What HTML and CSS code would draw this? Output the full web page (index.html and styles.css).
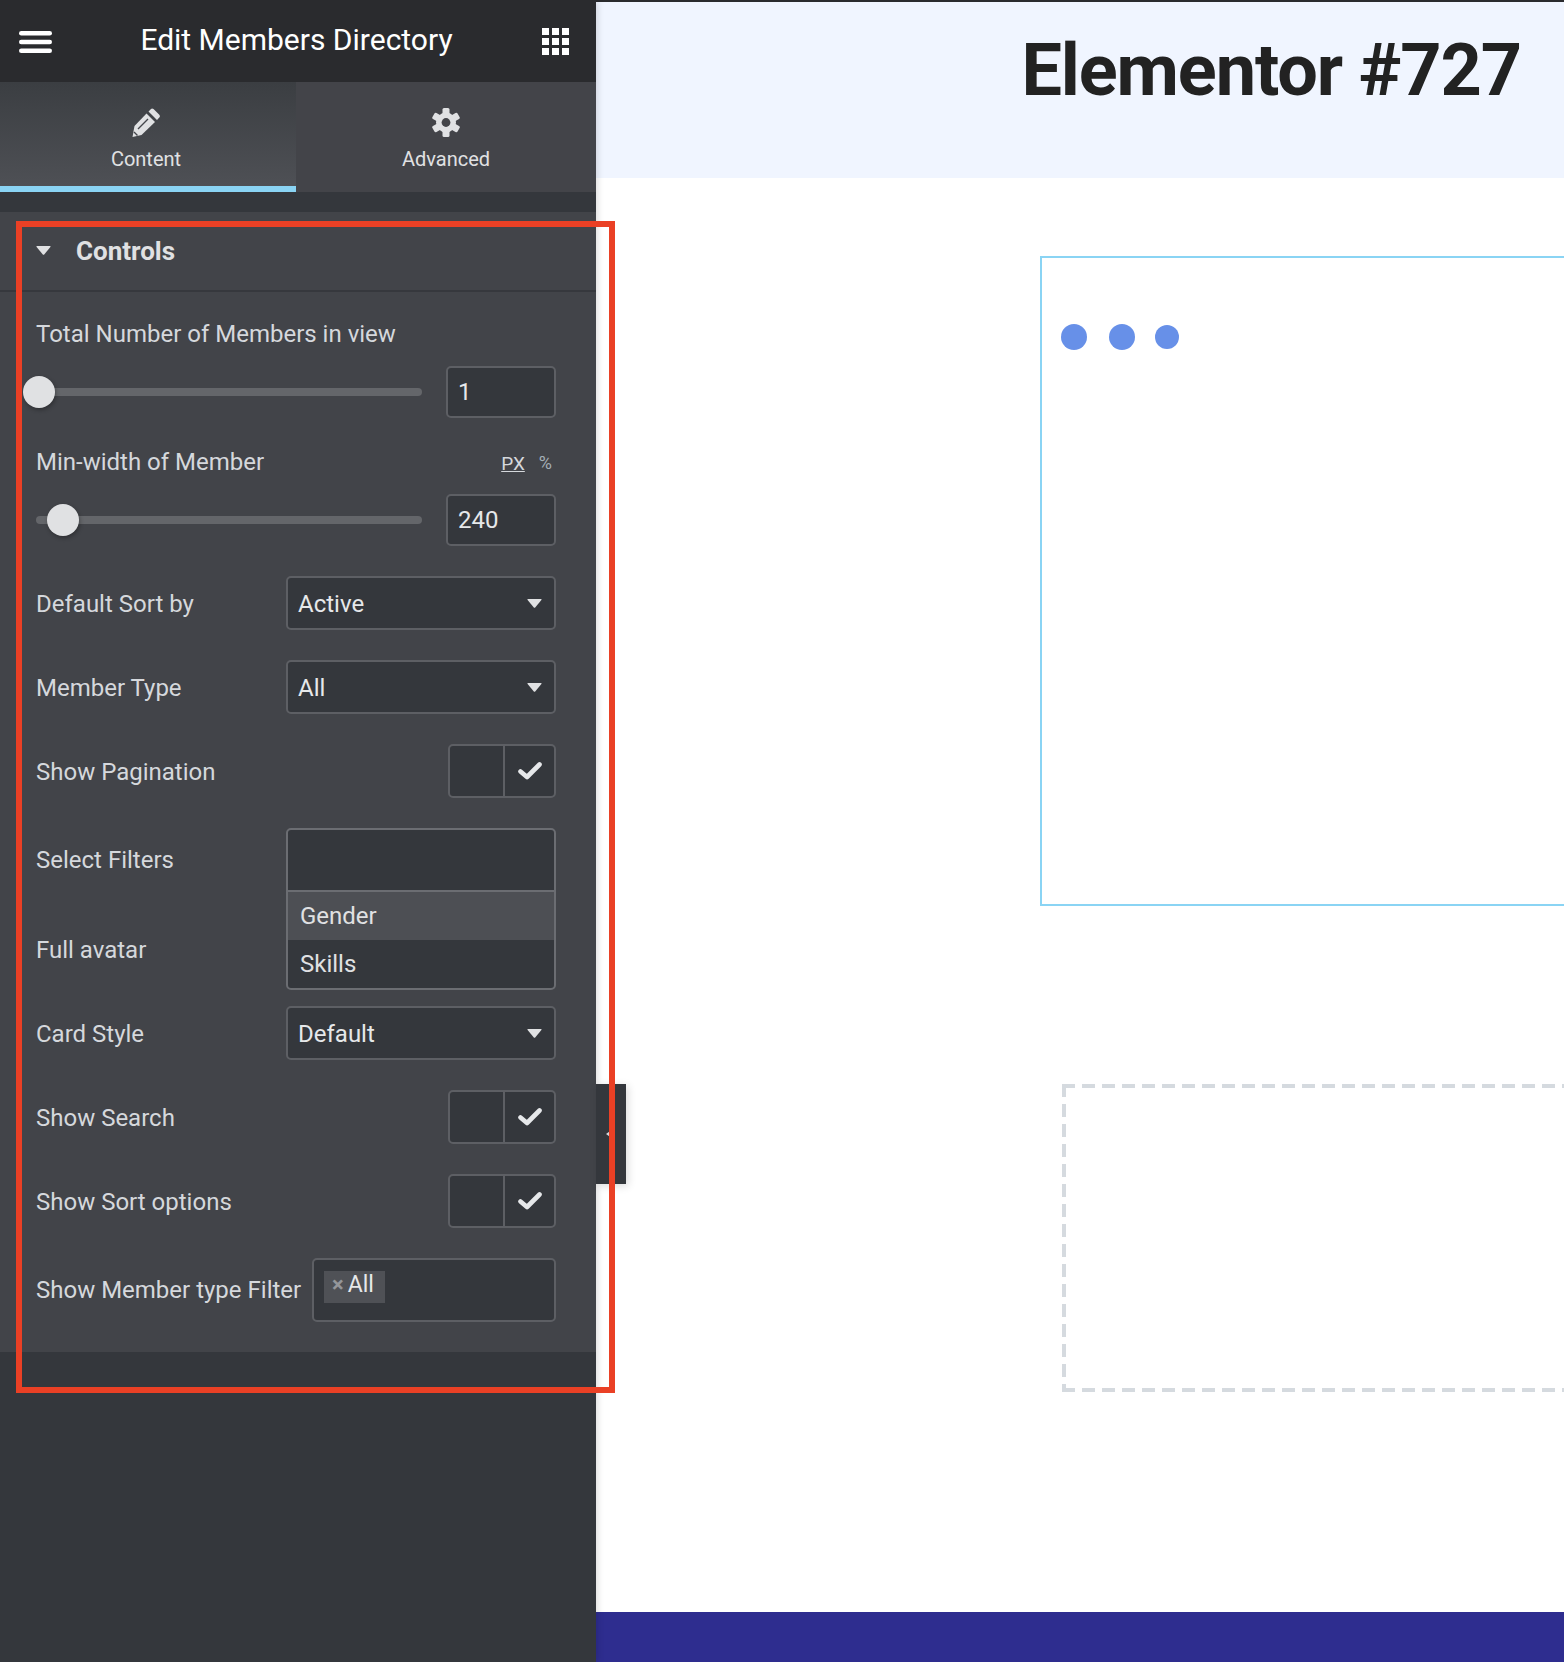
FILE: index.html
```html
<!doctype html>
<html>
<head>
<meta charset="utf-8">
<meta name="viewport" content="width=device-width, initial-scale=1.0">
<link rel="stylesheet" href="styles.css">
<title>Edit Members Directory</title>
</head>
<body>

<svg class="defs" width="0" height="0">
  <symbol id="check" viewBox="0 0 24 18">
    <path d="M2.5 9.5 L9 15 L21.5 2.5" fill="none" stroke="#e6e8ea" stroke-width="4.6" stroke-linejoin="round" stroke-linecap="round"/>
  </symbol>
  <symbol id="caret" viewBox="0 0 15 9">
    <path d="M1 0 H14 Q15 0 14.4 1 L8.2 8.4 Q7.5 9 6.8 8.4 L0.6 1 Q0 0 1 0 Z" fill="#e0e1e3"/>
  </symbol>
</svg>

<aside class="panel">
  <header class="panel-top">
    <svg class="hamburger" width="33" height="22" viewBox="0 0 33 22">
      <rect x="0" y="0" width="33" height="4.6" rx="2.3" fill="#fff"/>
      <rect x="0" y="8.7" width="33" height="4.6" rx="2.3" fill="#fff"/>
      <rect x="0" y="17.4" width="33" height="4.6" rx="2.3" fill="#fff"/>
    </svg>
    <h1>Edit Members Directory</h1>
    <div class="apps">
      <i></i><i></i><i></i><i></i><i></i><i></i><i></i><i></i><i></i>
    </div>
  </header>

  <nav class="tabs">
    <div class="tab tab-active">
      <svg width="28" height="29" viewBox="0 0 28 29">
        <path d="M14.5 5.5 L23 14 L9.5 27 L0.5 29 L2.5 18 Z" fill="#e0e1e3"/>
        <path d="M16.5 3.5 L19 1 Q20 0 21.5 1 L27.3 6.8 Q28.5 8.3 27.3 9.5 L25 12 Z" fill="#e0e1e3"/>
        <path d="M6 21 L16 11 M2 24 L5.5 27.5" stroke="#44464b" stroke-width="1.4" fill="none"/>
      </svg>
      <span>Content</span>
    </div>
    <div class="tab">
      <svg width="28" height="29" viewBox="0 0 28 29">
        <g fill="#e0e1e3">
          <circle cx="14" cy="14.5" r="10"/>
          <rect x="10.5" y="0" width="7" height="29" rx="1.5"/>
          <rect x="10.5" y="0" width="7" height="29" rx="1.5" transform="rotate(60 14 14.5)"/>
          <rect x="10.5" y="0" width="7" height="29" rx="1.5" transform="rotate(120 14 14.5)"/>
        </g>
        <circle cx="14" cy="14.5" r="4.4" fill="#434449"/>
      </svg>
      <span>Advanced</span>
    </div>
  </nav>

  <section class="section">
    <div class="section-head">
      <svg class="section-caret" width="15" height="9"><use href="#caret"/></svg>
      <h2>Controls</h2>
    </div>

    <div class="section-body">
      <div class="label">Total Number of Members in view</div>
      <div class="slider-row">
        <div class="track"><span class="handle handle-start"></span></div>
        <div class="field num">1</div>
      </div>

      <div class="label-row">
        <div class="label">Min-width of Member</div>
        <div class="units"><u>PX</u><span>%</span></div>
      </div>
      <div class="slider-row slider-last">
        <div class="track"><span class="handle handle-240"></span></div>
        <div class="field num">240</div>
      </div>

      <div class="row">
        <div class="label">Default Sort by</div>
        <div class="field select">Active<svg width="15" height="9"><use href="#caret"/></svg></div>
      </div>

      <div class="row">
        <div class="label">Member Type</div>
        <div class="field select">All<svg width="15" height="9"><use href="#caret"/></svg></div>
      </div>

      <div class="row">
        <div class="label">Show Pagination</div>
        <div class="switcher"><span></span><span><svg width="24" height="18"><use href="#check"/></svg></span></div>
      </div>

      <div class="row row-filters">
        <div class="label">Select Filters</div>
        <div class="multi">
          <div class="multi-input"></div>
          <div class="multi-opt multi-hover">Gender</div>
          <div class="multi-opt">Skills</div>
        </div>
      </div>

      <div class="row">
        <div class="label">Full avatar</div>
      </div>

      <div class="row">
        <div class="label">Card Style</div>
        <div class="field select">Default<svg width="15" height="9"><use href="#caret"/></svg></div>
      </div>

      <div class="row">
        <div class="label">Show Search</div>
        <div class="switcher"><span></span><span><svg width="24" height="18"><use href="#check"/></svg></span></div>
      </div>

      <div class="row">
        <div class="label">Show Sort options</div>
        <div class="switcher"><span></span><span><svg width="24" height="18"><use href="#check"/></svg></span></div>
      </div>

      <div class="row row-tags">
        <div class="label">Show Member type Filter</div>
        <div class="field tags"><span class="tag"><b>×</b>All</span></div>
      </div>
    </div>
  </section>
</aside>

<main class="preview">
  <div class="strip"></div>
  <div class="title-band"><h1>Elementor #727</h1></div>
  <div class="widget">
    <div class="dots"><i></i><i></i><i class="dot-small"></i></div>
  </div>
  <div class="dropzone"></div>
  <footer class="footer"></footer>
</main>

<div class="collapse"><i></i></div>
<div class="annotation"></div>

</body>
</html>
```

FILE: styles.css
```css
html, body {
    margin: 0;
    padding: 0;
    height: 1662px;
    overflow: hidden;
}
body {
    display: flex;
    position: relative;
    font-family: Roboto, "Liberation Sans", sans-serif;
    background-color: #fff;
}
h1, h2 {
    margin: 0;
    padding: 0;
}
.defs {
    position: absolute;
}

/* left panel */
.panel {
    width: 596px;
    flex-shrink: 0;
    background-color: #34373c;
    box-shadow: 0 0 8px rgba(0, 0, 0, 0.2);
    position: relative;
    z-index: 2;
}
.panel-top {
    height: 82px;
    background-color: #2a2b2e;
    display: flex;
    align-items: center;
    justify-content: space-between;
    padding: 0 27px 0 19px;
    box-sizing: border-box;
}
.panel-top h1 {
    color: #fff;
    font-size: 30px;
    font-weight: 400;
    margin: 0 1px 4px 0;
}
.hamburger {
    display: block;
    margin-top: 1px;
}
.apps {
    display: grid;
    grid-template-columns: repeat(3, 7px);
    grid-auto-rows: 7px;
    gap: 3px;
}
.apps i {
    background-color: #fff;
}

.tabs {
    display: flex;
    height: 110px;
}
.tab {
    width: 300px;
    background-color: #434449;
    color: #e0e1e3;
    font-size: 20px;
    display: flex;
    flex-direction: column;
    align-items: center;
    padding-top: 26px;
    box-sizing: border-box;
    gap: 10px;
}
.tab-active {
    width: 296px;
    padding-right: 4px;
    background: linear-gradient(#3b3e42, #4e5055);
    border-bottom: 6px solid #8ad4f4;
}

.section {
    margin-top: 20px;
    background-color: #424449;
}
.section-head {
    height: 80px;
    border-bottom: 2px solid #36383d;
    box-sizing: border-box;
    display: flex;
    align-items: center;
    padding: 0 36px;
    gap: 25px;
}
.section-caret {
    margin-bottom: 2px;
}
.section-head h2 {
    color: #e0e1e3;
    font-size: 26px;
    font-weight: 700;
}
.section-body {
    padding: 27px 40px 30px 36px;
}

.label {
    color: #d5d8dc;
    font-size: 24px;
    line-height: 30px;
}
.row .label {
    padding-top: 2px;
}
.row-filters .label, .row-tags .label {
    padding-top: 0;
}
.label-row {
    display: flex;
    justify-content: space-between;
    align-items: center;
}
.units {
    color: #d5d8dc;
    font-size: 19px;
    display: flex;
    gap: 14px;
    padding: 3px 4px 0 0;
}
.units span {
    color: #a4afb7;
    font-size: 18px;
}

.slider-row {
    display: flex;
    align-items: center;
    gap: 24px;
    margin: 17px 0 29px;
}
.slider-last {
    margin: 17px 0 30px;
}
.track {
    flex: 1;
    height: 8px;
    border-radius: 4px;
    background-color: #64666a;
    position: relative;
}
.handle {
    position: absolute;
    top: -12px;
    width: 32px;
    height: 32px;
    border-radius: 50%;
    background-color: #e0e1e3;
    box-shadow: 1px 2px 4px rgba(0, 0, 0, 0.3);
}
.handle-start {
    left: -13px;
}
.handle-240 {
    left: 11px;
}

.field {
    border: 2px solid #5d5f64;
    border-radius: 5px;
    background-color: #34373c;
    color: #e6e8ea;
    font-size: 24px;
    box-sizing: border-box;
}
.num {
    width: 110px;
    height: 52px;
    line-height: 48px;
    padding-left: 10px;
}

.row {
    display: flex;
    justify-content: space-between;
    align-items: center;
    height: 54px;
    margin-bottom: 30px;
}
.row-filters {
    height: 64px;
    position: relative;
}
.row-tags {
    height: 64px;
    margin-bottom: 0;
}
.select {
    width: 270px;
    height: 54px;
    padding: 2px 12px 0 10px;
    display: flex;
    align-items: center;
    justify-content: space-between;
}
.select svg {
    display: block;
    margin-top: -2px;
}

.switcher {
    width: 108px;
    height: 54px;
    display: flex;
    border: 2px solid #5d5f64;
    border-radius: 5px;
    box-sizing: border-box;
    background-color: #34373c;
}
.switcher span {
    flex: 1;
    display: flex;
    align-items: center;
    justify-content: center;
}
.switcher span + span {
    flex: none;
    width: 51px;
    box-sizing: border-box;
    border-left: 2px solid #5d5f64;
}

/* open dropdown hangs over the Full avatar row */
.multi {
    position: absolute;
    right: 0;
    top: 0;
    width: 270px;
    border: 2px solid #6b6d72;
    border-radius: 5px;
    box-sizing: border-box;
    background-color: #34373c;
    color: #e0e1e3;
    font-size: 24px;
    overflow: hidden;
}
.multi-input {
    height: 62px;
    border-bottom: 2px solid #6b6d72;
    box-sizing: border-box;
}
.multi-opt {
    height: 48px;
    line-height: 48px;
    padding-left: 12px;
}
.multi-hover {
    background-color: #4d4f54;
}

.tags {
    width: 244px;
    height: 64px;
    padding: 10px;
}
.tag {
    display: inline-block;
    height: 32px;
    line-height: 28px;
    background-color: #4f5156;
    padding: 0 11px 0 8px;
    font-size: 23px;
}
.tag b {
    color: #94969a;
    font-size: 22px;
    margin-right: 4px;
}

/* preview */
.preview {
    flex: 1;
    min-width: 0;
    overflow: hidden;
    display: flex;
    flex-direction: column;
}
.strip {
    height: 2px;
    flex-shrink: 0;
    background-color: #2a2b2e;
}
.title-band {
    height: 176px;
    flex-shrink: 0;
    background-color: #f0f5ff;
    padding-right: 43px;
    text-align: right;
    box-sizing: border-box;
}
.title-band h1 {
    color: #222;
    font-size: 72px;
    line-height: 84px;
    font-weight: 700;
    letter-spacing: -1.1px;
    padding-top: 27px;
}
.widget {
    width: 640px;
    height: 650px;
    flex-shrink: 0;
    margin: 78px 0 0 444px;
    border: 2px solid #8ad4f4;
    box-sizing: border-box;
    padding: 66px 0 0 19px;
}
.dots {
    display: flex;
    align-items: center;
    gap: 22px;
}
.dots i {
    width: 26px;
    height: 26px;
    border-radius: 50%;
    background-color: #6790e8;
}
.dots .dot-small {
    width: 24px;
    height: 24px;
    margin-left: -2px;
}
.dropzone {
    width: 640px;
    height: 308px;
    flex-shrink: 0;
    margin: 178px 0 0 466px;
    background-image:
        repeating-linear-gradient(90deg, #d5dadf 0 12.6px, transparent 12.6px 20px),
        repeating-linear-gradient(90deg, #d5dadf 0 12.6px, transparent 12.6px 20px),
        repeating-linear-gradient(180deg, #d5dadf 0 12.6px, transparent 12.6px 20px);
    background-size: 100% 4px, 100% 4px, 4px 100%;
    background-position: 0 0, 0 100%, 0 0;
    background-repeat: no-repeat;
}
.footer {
    margin-top: auto;
    height: 50px;
    flex-shrink: 0;
    background-color: #2e2d8f;
}

/* overlays */
.collapse {
    position: absolute;
    left: 596px;
    top: 1084px;
    width: 30px;
    height: 100px;
    background-color: #34373c;
    box-shadow: 2px 2px 8px rgba(0, 0, 0, 0.15);
    z-index: 3;
    display: flex;
    align-items: center;
    padding-left: 10px;
    box-sizing: border-box;
}
.collapse i {
    width: 0;
    height: 0;
    border-top: 5px solid transparent;
    border-bottom: 5px solid transparent;
    border-right: 7px solid #d5d8dc;
}
.annotation {
    position: absolute;
    left: 16px;
    top: 221px;
    width: 599px;
    height: 1172px;
    border: 6px solid #ea4025;
    box-sizing: border-box;
    z-index: 4;
}
```
